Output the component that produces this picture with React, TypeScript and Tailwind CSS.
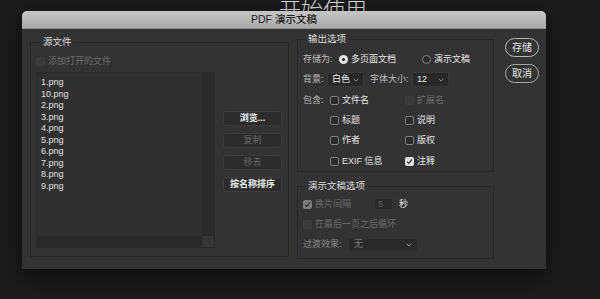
import React from "react";

const files = ["1.png", "10.png", "2.png", "3.png", "4.png", "5.png", "6.png", "7.png", "8.png", "9.png"];

type CheckProps = { checked?: boolean; disabled?: boolean };

const Check: React.FC<CheckProps> = ({ checked, disabled }) => {
  if (checked) {
    return (
      <span
        className={`flex h-[9px] w-[9px] shrink-0 items-center justify-center rounded-[2px] ${
          disabled ? "bg-[#7c7c7c]" : "bg-[#e2e2e2]"
        }`}
      >
        <svg width="7" height="7" viewBox="0 0 7 7">
          <path d="M1 3.6 L2.8 5.4 L6 1.4" fill="none" stroke={disabled ? "#333" : "#2a2a2a"} strokeWidth="1.3" />
        </svg>
      </span>
    );
  }
  return (
    <span
      className={`h-[9px] w-[9px] shrink-0 rounded-[2px] border ${
        disabled ? "border-[#3e3e3e] bg-[#3a3a3a]" : "border-[#7e7e7e] bg-[#2b2b2b]"
      }`}
    />
  );
};

const Chevron = () => (
  <svg width="6" height="4" viewBox="0 0 6 4" className="shrink-0">
    <path d="M0.6 0.8 L3 3 L5.4 0.8" fill="none" stroke="#9a9a9a" strokeWidth="0.9" />
  </svg>
);

const Option: React.FC<{ label: string; checked?: boolean; disabled?: boolean; className?: string }> = ({
  label,
  checked,
  disabled,
  className = "",
}) => (
  <span className={`flex items-center ${className}`}>
    <Check checked={checked} disabled={disabled} />
    <span className={`ml-[3px] ${disabled ? "text-[#6c6c6c]" : "text-[#e4e4e4]"}`}>{label}</span>
  </span>
);

const SideButton: React.FC<{ label: string; disabled?: boolean }> = ({ label, disabled }) => (
  <div
    className={`flex h-[15px] items-center justify-center rounded-[3px] border border-[#3c3c3c] bg-[#2c2c2c] ${
      disabled ? "text-[#666]" : "font-bold text-[#f0f0f0]"
    }`}
  >
    {label}
  </div>
);

export default function App() {
  return (
    <div
      className="relative h-[299px] w-[600px] overflow-hidden bg-[#1b1b1b] text-[9px] leading-none"
      style={{ fontFamily: '"Liberation Sans", "Noto Sans CJK SC", sans-serif' }}
    >
      {/* page behind the dialog */}
      <div className="flex justify-center pl-[46px] text-[22px] font-light leading-[22px] text-[#e2e2e2]">
        开始使用
      </div>

      {/* dialog */}
      <div className="absolute left-[22px] top-[11px] flex h-[258px] w-[524px] flex-col overflow-hidden rounded-t-[5px] bg-[#333333] shadow-[0_6px_24px_rgba(0,0,0,0.55)]">
        <div className="flex h-[18px] shrink-0 items-center justify-center border-b border-[#8e8e8e] bg-linear-to-b from-[#c6c6c6] to-[#aaaaaa] text-[10.5px] font-medium text-[#1a1a1a]">
          PDF 演示文稿
        </div>

        <div className="flex flex-1 pl-[8px]">
          {/* 源文件 */}
          <fieldset className="mt-[8px] h-[220px] w-[259px] border border-[#272727] pl-[5px] pt-[10px]">
            <legend className="ml-[4px] px-[3px] text-[9.5px] leading-[10px] text-[#dcdcdc]">源文件</legend>
            <Option label="添加打开的文件" disabled />
            <div className="mt-[6px] flex">
              <div className="flex h-[176px] w-[179px] flex-col border border-[#2a2a2a]">
                <div className="flex flex-1">
                  <div className="flex-1 bg-[#303030] pl-[4px] pt-[4px] leading-[11.5px] text-[#e0e0e0]">
                    {files.map((f) => (
                      <div key={f}>{f}</div>
                    ))}
                  </div>
                  <div className="w-[12px] bg-[#2a2a2a]" />
                </div>
                <div className="flex h-[11px]">
                  <div className="flex-1 bg-[#292929]" />
                  <div className="w-[12px] bg-[#363636]" />
                </div>
              </div>
              <div className="ml-[8px] mt-[39px] flex w-[59px] flex-col gap-[7px]">
                <SideButton label="浏览..." />
                <SideButton label="复制" disabled />
                <SideButton label="移去" disabled />
                <SideButton label="按名称排序" />
              </div>
            </div>
          </fieldset>

          <div className="ml-[8px] flex w-[197px] flex-col">
            {/* 输出选项 */}
            <fieldset className="mt-[5px] h-[138px] border border-[#272727] pl-[5px] pt-[5px] text-[#bdbdbd]">
              <legend className="ml-[2px] px-[3px] text-[9.5px] leading-[10px] text-[#dcdcdc]">输出选项</legend>
              <div className="flex h-[20px] items-center">
                <span className="w-[36px]">存储为:</span>
                <span className="flex w-[83px] items-center">
                  <span className="flex h-[9px] w-[9px] items-center justify-center rounded-full bg-[#e6e6e6]">
                    <span className="h-[3px] w-[3px] rounded-full bg-[#2a2a2a]" />
                  </span>
                  <span className="ml-[3px] text-[#e6e6e6]">多页面文档</span>
                </span>
                <span className="flex items-center">
                  <span className="h-[9px] w-[9px] rounded-full border border-[#858585] bg-[#2b2b2b]" />
                  <span className="ml-[3px] text-[#e6e6e6]">演示文稿</span>
                </span>
              </div>
              <div className="flex h-[21px] items-center">
                <span className="w-[24px]">背景:</span>
                <span className="flex h-[15px] w-[37px] items-center justify-between rounded-[2px] border border-[#3a3a3a] bg-[#282828] px-[4px] text-[#ececec]">
                  白色
                  <Chevron />
                </span>
                <span className="ml-[6px] w-[42px]">字体大小:</span>
                <span className="flex h-[15px] w-[37px] items-center justify-between rounded-[2px] border border-[#3a3a3a] bg-[#282828] px-[4px] text-[#ececec]">
                  12
                  <Chevron />
                </span>
              </div>
              <div className="flex h-[20px] items-center">
                <span className="w-[27px]">包含:</span>
                <Option label="文件名" className="w-[75px]" />
                <Option label="扩展名" disabled />
              </div>
              <div className="flex h-[20px] items-center pl-[27px]">
                <Option label="标题" className="w-[75px]" />
                <Option label="说明" />
              </div>
              <div className="flex h-[20.5px] items-center pl-[27px]">
                <Option label="作者" className="w-[75px]" />
                <Option label="版权" />
              </div>
              <div className="flex h-[21px] items-center pl-[27px]">
                <Option label="EXIF 信息" className="w-[75px]" />
                <Option label="注释" checked />
              </div>
            </fieldset>

            {/* 演示文稿选项 */}
            <fieldset className="mt-[9px] h-[78px] border border-[#272727] pl-[5px] pt-[3px] text-[#bdbdbd]">
              <legend className="ml-[2px] px-[3px] text-[9.5px] leading-[10px] text-[#dcdcdc]">演示文稿选项</legend>
              <div className="flex h-[20px] items-center">
                <Option label="换片间隔" checked disabled className="w-[71px]" />
                <span className="flex h-[12px] w-[19px] items-center border border-[#353535] bg-[#2a2a2a] pl-[3px] text-[#606060]">
                  5
                </span>
                <span className="ml-[6px] text-[#e4e4e4]">秒</span>
              </div>
              <div className="flex h-[20px] items-center">
                <Option label="在最后一页之后循环" disabled />
              </div>
              <div className="flex h-[21px] items-center">
                <span className="w-[45px] text-[#8a8a8a]">过渡效果:</span>
                <span className="flex h-[14px] w-[70px] items-center justify-between rounded-[2px] border border-[#353535] bg-[#2a2a2a] px-[5px] text-[#777]">
                  无
                  <Chevron />
                </span>
              </div>
            </fieldset>
          </div>

          {/* actions */}
          <div className="ml-[11px] mt-[9px] flex w-[34px] flex-col gap-[7px]">
            <div className="flex h-[19px] items-center justify-center rounded-full border border-[#b8b8b8] text-[10px] text-[#e6e6e6]">
              存储
            </div>
            <div className="flex h-[19px] items-center justify-center rounded-full border border-[#a8a8a8] text-[10px] text-[#e6e6e6]">
              取消
            </div>
          </div>
        </div>
      </div>
    </div>
  );
}
